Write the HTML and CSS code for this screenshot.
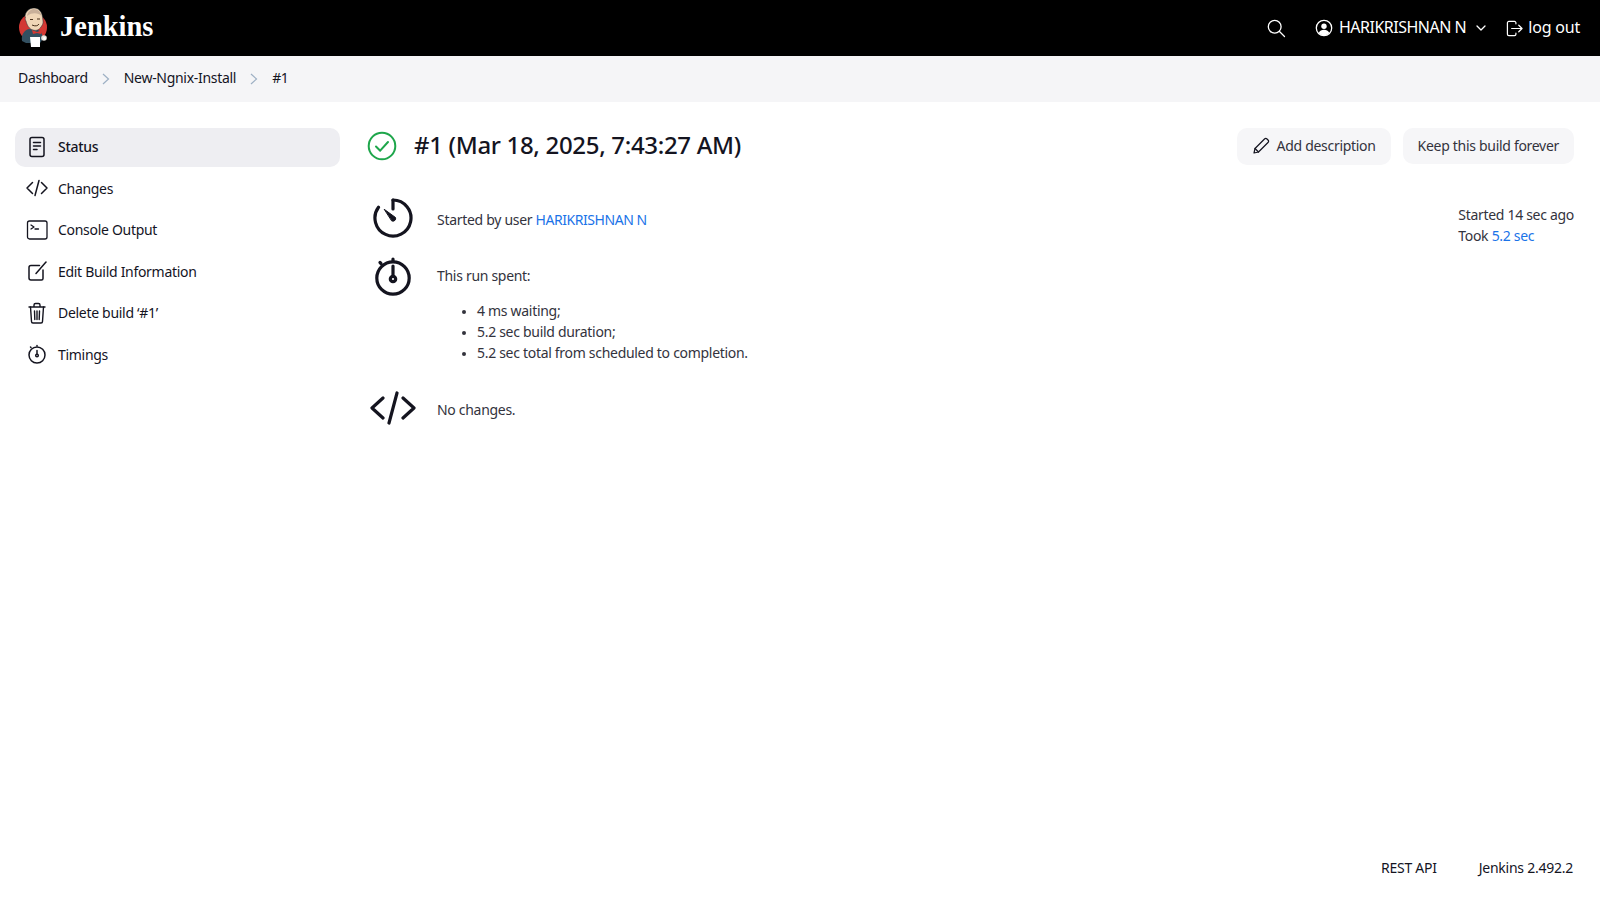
FILE: index.html
```html
<!DOCTYPE html>
<html lang="en">
<head>
  <meta charset="UTF-8">
  <title>#1 - New-Ngnix-Install - Jenkins</title>
  <link rel="stylesheet" href="styles.css">
</head>
<body>
  <header class="topbar">
    <a class="brand" href="#">
      <svg class="brand-logo" viewBox="0 0 32 40" width="32" height="40">
        <circle cx="15" cy="19.500" r="14" fill="#d33833"/>
        <path d="M4 33c-1-6 2-11 7-12l9 1c3 1 5 5 5 9l-3 4H8z" fill="#335061"/>
        <path d="M7 9c0-5 4-9 9-9s8 4 8.500 9l.5 4c.5 3-1 4-2 6-2 3-5 4-8 3-4-1-6-5-7-9-1-1-1-3-.5-4z" fill="#f0d6b7" stroke="#1c2a35" stroke-width=".5"/>
        <path d="M9 8c1-5 4-7 7-7 4 0 7 3 7.500 7-3-3-9-4-14.500 0z" fill="#c9b09a"/>
        <path d="M12 11.500h3M19 11h3M14 17c3 1.500 6 1 7-1" stroke="#49311c" stroke-width="1" fill="none"/>
        <path d="M14 22l5 2 5-2-1 4-4-1-4 1z" fill="#d33833"/>
        <path d="M12 29h10v10H13z" fill="#fff"/>
        <circle cx="26" cy="30" r="2.800" fill="#e8e2dc"/>
        <circle cx="26.500" cy="30.500" r="1.400" fill="#fff"/>
      </svg>
      <span class="brand-name">Jenkins</span>
    </a>
    <div class="topbar-right">
      <svg class="top-search" viewBox="0 0 20 20" width="20" height="20" fill="none" stroke="#fff" stroke-width="1.300" stroke-linecap="round">
        <circle cx="8.700" cy="8.700" r="6.400"/>
        <path d="M13.500 13.500l5 5"/>
      </svg>
      <a class="top-user" href="#">
        <svg viewBox="0 0 18 18" width="18" height="18">
          <circle cx="9" cy="9" r="7.700" fill="none" stroke="#fff" stroke-width="1.300"/>
          <circle cx="9" cy="7.300" r="2.700" fill="#fff"/>
          <path d="M3.700 14c1-2.400 3-3.300 5.300-3.300s4.300.9 5.300 3.300c-1.400 1.500-3.300 2.300-5.300 2.300s-3.900-.8-5.300-2.300z" fill="#fff"/>
        </svg>
        <span class="top-name">HARIKRISHNAN N</span>
      </a>
      <svg class="top-chevron" viewBox="0 0 10 6" width="10" height="6" fill="none" stroke="#fff" stroke-width="1.300" stroke-linecap="round" stroke-linejoin="round">
        <path d="M1 1l4 4 4-4"/>
      </svg>
      <a class="top-logout" href="#">
        <svg viewBox="0 0 18 18" width="17" height="17" fill="none" stroke="#fff" stroke-width="1.300" stroke-linecap="round" stroke-linejoin="round">
          <path d="M10.500 4V3a1.500 1.500 0 0 0-1.500-1.500H3A1.500 1.500 0 0 0 1.500 3v12A1.500 1.500 0 0 0 3 16.500h6a1.500 1.500 0 0 0 1.500-1.500v-1"/>
          <path d="M6 9h11M13.500 5.500L17 9l-3.500 3.500"/>
        </svg>
        <span class="top-name">log out</span>
      </a>
    </div>
  </header>

  <nav class="crumbs">
    <a href="#">Dashboard</a>
    <svg class="crumb-sep" viewBox="0 0 8 12" width="8" height="12" fill="none" stroke="#9db0c4" stroke-width="1.200"><path d="M1 1l5.500 5L1 11"/></svg>
    <a href="#">New-Ngnix-Install</a>
    <svg class="crumb-sep" viewBox="0 0 8 12" width="8" height="12" fill="none" stroke="#9db0c4" stroke-width="1.200"><path d="M1 1l5.500 5L1 11"/></svg>
    <a href="#">#1</a>
  </nav>

  <div class="page">
    <aside class="side">
      <a class="side-item active" href="#">
        <svg viewBox="0 0 24 24" width="24" height="24" fill="none" stroke="#14141f" stroke-width="1.500" stroke-linecap="round" stroke-linejoin="round">
          <rect x="5" y="2.500" width="14" height="19" rx="2"/>
          <path d="M8.500 7.500h7M8.500 11h7M8.500 14.500h3.500"/>
        </svg>
        <span>Status</span>
      </a>
      <a class="side-item" href="#">
        <svg viewBox="0 0 24 24" width="24" height="24" fill="none" stroke="#14141f" stroke-width="1.500" stroke-linecap="round" stroke-linejoin="round">
          <path d="M7.500 6.500L2 12l5.500 5.500M16.500 6.500L22 12l-5.500 5.500M14 4.500l-4 15"/>
        </svg>
        <span>Changes</span>
      </a>
      <a class="side-item" href="#">
        <svg viewBox="0 0 24 24" width="24" height="24" fill="none" stroke="#14141f" stroke-width="1.300" stroke-linecap="round" stroke-linejoin="round">
          <rect x="2.500" y="3" width="19.500" height="18" rx="2"/>
          <path d="M6 7l3 2-3 2M10 11h3.500"/>
        </svg>
        <span>Console Output</span>
      </a>
      <a class="side-item" href="#">
        <svg viewBox="0 0 24 24" width="24" height="24" fill="none" stroke="#14141f" stroke-width="1.500" stroke-linecap="round" stroke-linejoin="round">
          <path d="M14.500 6.500H6a2 2 0 0 0-2 2V19a2 2 0 0 0 2 2h10.500a1.500 1.500 0 0 0 1.500-1.500V11"/>
          <path d="M11 14.500L21 3"/>
        </svg>
        <span>Edit Build Information</span>
      </a>
      <a class="side-item" href="#">
        <svg viewBox="0 0 24 24" width="24" height="24" fill="none" stroke="#14141f" stroke-width="1.400" stroke-linecap="round" stroke-linejoin="round">
          <path d="M4 6h16M9 6V4a1.500 1.500 0 0 1 1.500-1.500h3A1.500 1.500 0 0 1 15 4v2"/>
          <path d="M5.500 6l1 14.500A1.500 1.500 0 0 0 8 22h8a1.500 1.500 0 0 0 1.500-1.500l1-14.500"/>
          <path d="M9.500 10l.3 8.500M12 10v8.500M14.500 10l-.3 8.500"/>
        </svg>
        <span>Delete build ‘#1’</span>
      </a>
      <a class="side-item" href="#">
        <svg viewBox="0 0 24 24" width="24" height="24" fill="none" stroke="#14141f" stroke-width="1.500" stroke-linecap="round" stroke-linejoin="round">
          <circle cx="12" cy="13" r="8"/>
          <path d="M12 3.500v.5M5.500 5l.5.5M12 8.500v3.500"/>
          <circle cx="12" cy="13.500" r="1.300"/>
        </svg>
        <span>Timings</span>
      </a>
    </aside>

    <main class="content">
      <div class="title-row">
        <svg class="status-ok" viewBox="0 0 30 30" width="30" height="30" fill="none" stroke="#1ea64b" stroke-width="2" stroke-linecap="round" stroke-linejoin="round">
          <circle cx="15" cy="15" r="13.300"/>
          <path d="M9 15.500l4.200 4.200L21 11"/>
        </svg>
        <h1>#1 (Mar 18, 2025, 7:43:27 AM)</h1>
        <div class="title-actions">
          <a class="btn btn-tall" href="#">
            <svg viewBox="0 0 18 18" width="18" height="18" fill="none" stroke="#14141f" stroke-width="1.200" stroke-linecap="round" stroke-linejoin="round">
              <path d="M2 16l1-4.500L12.500 2a1.800 1.800 0 0 1 2.500 0l1 1a1.800 1.800 0 0 1 0 2.500L6.500 15z"/>
              <path d="M3 11.500L6.500 15"/>
            </svg>
            <span>Add description</span>
          </a>
          <a class="btn" href="#">Keep this build forever</a>
        </div>
      </div>

      <div class="build-info">
        <div class="summary">
          <div class="summary-row row-started">
            <svg class="summary-icon" viewBox="0 0 40 40" width="40" height="40" fill="none" stroke="#14141f" stroke-width="3.200" stroke-linecap="round" stroke-linejoin="round">
              <path d="M20 2a18 18 0 1 1-14.500 7.300"/>
              <path d="M20 2v9"/>
              <path d="M11.500 11.500L22.500 19.500a2.700 2.700 0 0 1-3.500 3.500z" fill="#14141f" stroke-width="1"/>
            </svg>
            <p>Started by user <a class="link" href="#">HARIKRISHNAN N</a></p>
          </div>
          <div class="summary-row row-spent">
            <svg class="summary-icon" viewBox="0 0 40 40" width="40" height="40" fill="none" stroke="#14141f" stroke-width="3.200" stroke-linecap="round" stroke-linejoin="round">
              <circle cx="20" cy="22" r="16.200"/>
              <path d="M20 3v2M7 6.500l1 1M20 10v9"/>
              <circle cx="20" cy="23" r="2.700"/>
            </svg>
            <div class="spent">
              <p>This run spent:</p>
              <ul>
                <li>4 ms waiting;</li>
                <li>5.2 sec build duration;</li>
                <li>5.2 sec total from scheduled to completion.</li>
              </ul>
            </div>
          </div>
          <div class="summary-row row-changes">
            <svg class="summary-icon" viewBox="0 0 46 34" width="46" height="34" fill="none" stroke="#14141f" stroke-width="3.200" stroke-linecap="round" stroke-linejoin="round">
              <path d="M13 7L2 17l11 10M33 7l11 10-11 10M27 2l-8 30"/>
            </svg>
            <p>No changes.</p>
          </div>
        </div>
        <div class="timing">
          <div>Started 14 sec ago</div>
          <div>Took <a class="link" href="#">5.2 sec</a></div>
        </div>
      </div>
    </main>
  </div>

  <footer class="foot">
    <a href="#">REST API</a>
    <a href="#">Jenkins 2.492.2</a>
  </footer>
</body>
</html>
```

FILE: styles.css
```css
* { box-sizing: border-box; }
html, body { height: 100%; }
body {
  margin: 0;
  display: flex;
  flex-direction: column;
  height: 900px;
  overflow: hidden;
  background: #fff;
  color: #14141f;
  font-family: "Noto Sans", "Open Sans", sans-serif;
  font-size: 14px;
  line-height: 21px;
  letter-spacing: -0.3px;
}
a { color: inherit; text-decoration: none; }
p { margin: 0; }
svg { display: block; flex: none; }

.topbar {
  height: 56px;
  flex: none;
  background: #000;
  color: #fff;
  display: flex;
  align-items: center;
  justify-content: space-between;
  padding: 0 20px 0 18px;
}
.brand { display: flex; align-items: center; gap: 10px; }
.brand-name {
  font-family: "Liberation Serif", serif;
  font-weight: 700;
  font-size: 28.500px;
  letter-spacing: 0;
  padding-bottom: 4px;
}
.topbar-right { display: flex; align-items: center; font-size: 16px; letter-spacing: -0.2px; }
.top-search { margin-right: 29px; }
.top-user { display: flex; align-items: center; gap: 6px; }
.top-user .top-name { letter-spacing: -0.5px; }
.top-name { padding-bottom: 2px; }
.top-chevron { margin: 0 20px 0 10px; }
.top-logout { display: flex; align-items: center; gap: 5px; }

.crumbs {
  height: 46px;
  flex: none;
  background: #f5f5f7;
  display: flex;
  align-items: center;
  gap: 14px;
  padding: 0 18px;
}
.crumbs a { padding-bottom: 4px; }

.page { flex: 1; display: flex; padding: 26px 26px 0 15px; }
.side { width: 325px; flex: none; display: flex; flex-direction: column; gap: 2.600px; }
.side-item {
  height: 39px;
  display: flex;
  align-items: center;
  gap: 9px;
  padding: 0 0 2px 10px;
  border-radius: 10px;
}
.side-item.active { background: #eeeef2; font-weight: 500; }

.content { flex: 1; padding-left: 28px; }
.title-row { display: flex; align-items: center; height: 37px; }
.status-ok { margin: -2px 17px 0 -1px; }
h1 {
  margin: -4px 0 0;
  flex: 1;
  font-size: 24px;
  font-weight: 500;
  line-height: 36px;
  letter-spacing: -0.32px;
}
.title-actions { display: flex; align-items: flex-start; gap: 12px; }
.btn {
  height: 36px;
  padding: 0 15px 2px;
  display: flex;
  align-items: center;
  gap: 7px;
  border-radius: 10px;
  background: #f6f6f8;
  color: #33333d;
}
.btn-tall { height: 37px; }

.build-info { display: flex; justify-content: space-between; margin-top: 33px; }
.summary { display: flex; flex-direction: column; }
.summary-row { display: flex; }
.summary-icon { margin-left: 5px; }
.summary-row p { color: #33333d; }
.row-started { height: 60px; align-items: flex-start; gap: 24px; }
.row-started p { margin-top: 11px; }
.row-spent { gap: 24px; }
.row-spent .summary-icon { margin-top: -2px; }
.spent { padding-top: 7px; }
.spent ul { margin: 14px 0 0; padding-left: 40px; color: #33333d; }
.spent li::marker { font-size: 11px; }
.row-changes { margin-top: 30px; align-items: center; gap: 21px; }
.row-changes .summary-icon { margin: -2px 0 0 2px; }
.link { color: #1a73e8; }
.row-started .link { letter-spacing: -0.45px; }
.timing { margin-top: 6px; color: #33333d; }

.foot {
  height: 64px;
  flex: none;
  display: flex;
  justify-content: flex-end;
  gap: 42px;
  padding: 21px 27px 0 0;
  letter-spacing: -0.25px;
}
```
